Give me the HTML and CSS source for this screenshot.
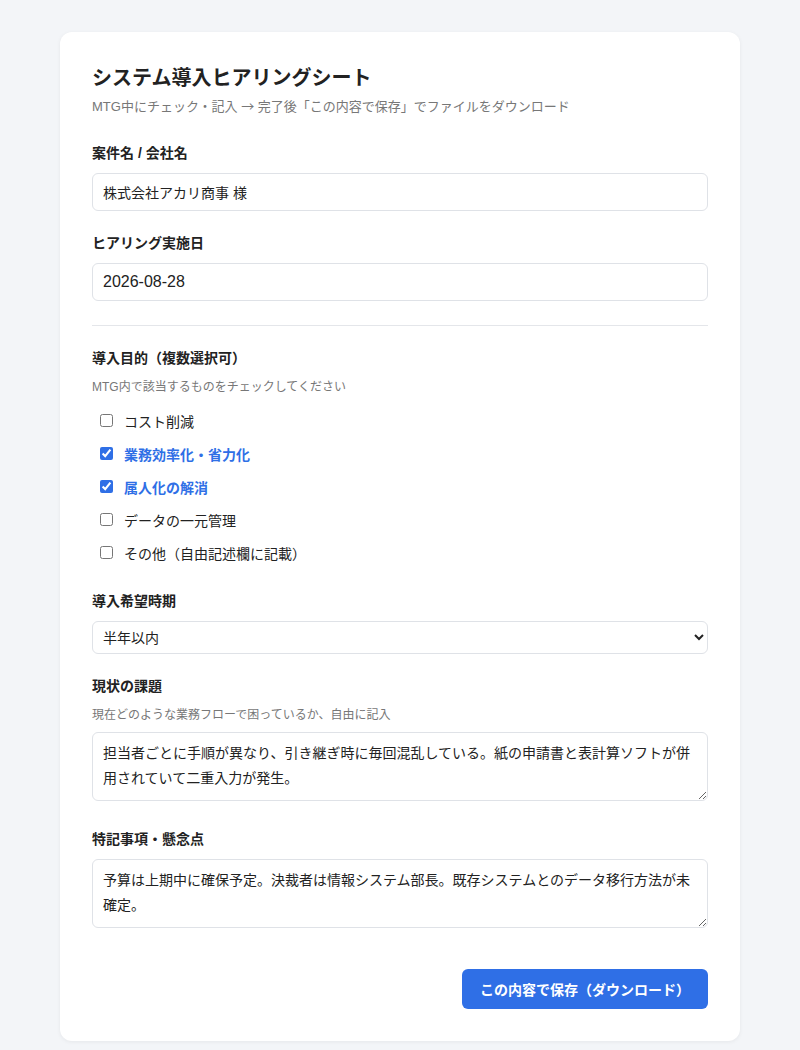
FILE: index.html
```html
<!DOCTYPE html>
<html lang="ja">
<head>
  <meta charset="UTF-8" />
  <meta name="viewport" content="width=device-width, initial-scale=1.0"/>
  <title>システム導入ヒアリングシート</title>
  <link rel="stylesheet" href="styles.css">
</head>
<body>

  <form class="sheet">
    <h1 class="title">システム導入ヒアリングシート</h1>
    <p class="lead">MTG中にチェック・記入 <span class="arrow">→</span> 完了後「この内容で保存」でファイルをダウンロード</p>

    <div class="field">
      <label class="label" for="company">案件名 / 会社名</label>
      <input class="input" id="company" type="text" value="株式会社アカリ商事 様">
    </div>

    <div class="field">
      <label class="label" for="date">ヒアリング実施日</label>
      <input class="input input-date" id="date" type="text" value="2026-08-28">
    </div>

    <hr class="divider">

    <div class="field field-group">
      <div class="label">導入目的（複数選択可）</div>
      <p class="hint">MTG内で該当するものをチェックしてください</p>
      <div class="checks">
        <label class="check"><input type="checkbox"><span>コスト削減</span></label>
        <label class="check"><input type="checkbox" checked><span>業務効率化・省力化</span></label>
        <label class="check"><input type="checkbox" checked><span>属人化の解消</span></label>
        <label class="check"><input type="checkbox"><span>データの一元管理</span></label>
        <label class="check"><input type="checkbox"><span>その他（自由記述欄に記載）</span></label>
      </div>
    </div>

    <div class="field">
      <label class="label" for="period">導入希望時期</label>
      <select class="select" id="period">
        <option>半年以内</option>
        <option>3ヶ月以内</option>
        <option>1年以内</option>
        <option>未定</option>
      </select>
    </div>

    <div class="field">
      <label class="label" for="issue">現状の課題</label>
      <p class="hint">現在どのような業務フローで困っているか、自由に記入</p>
      <textarea class="textarea" id="issue" rows="2">担当者ごとに手順が異なり、引き継ぎ時に毎回混乱している。紙の申請書と表計算ソフトが併用されていて二重入力が発生。</textarea>
    </div>

    <div class="field">
      <label class="label" for="notes">特記事項・懸念点</label>
      <textarea class="textarea" id="notes" rows="2">予算は上期中に確保予定。決裁者は情報システム部長。既存システムとのデータ移行方法が未確定。</textarea>
    </div>

    <div class="actions">
      <button class="btn" type="button">この内容で保存（ダウンロード）</button>
    </div>
  </form>

</body>
</html>
```

FILE: styles.css
```css
:root {
  --text: #222;
  --muted: #777;
  --border: #dfe2e7;
  --blue: #2f6fe6;
}

body {
  margin: 0;
  padding: 32px 0 10px;
  background: #f3f5f8;
  font-family: "Liberation Sans", "Noto Sans CJK JP", sans-serif;
  color: var(--text);
}

.sheet {
  width: 616px;
  margin: 0 auto;
  padding: 32px;
  background: #fff;
  border-radius: 12px;
  box-shadow: 0 1px 4px rgba(0, 0, 0, 0.06);
}

.title {
  margin: 0;
  font-size: 20px;
  line-height: 28px;
  font-weight: 700;
}

.lead {
  margin: 4px 0 26px;
  font-size: 13px;
  line-height: 20px;
  color: var(--muted);
}

.lead .arrow {
  font-family: "Noto Sans CJK JP", sans-serif;
}

.field {
  margin-bottom: 22px;
}

.label {
  display: block;
  font-size: 14px;
  line-height: 20px;
  font-weight: 700;
  margin-bottom: 10px;
}

.hint {
  margin: 0 0 8px;
  font-size: 12px;
  line-height: 18px;
  color: var(--muted);
}

.input,
.select,
.textarea {
  display: block;
  width: 100%;
  box-sizing: border-box;
  border: 1px solid var(--border);
  border-radius: 6px;
  font-family: inherit;
  font-size: 14px;
  color: var(--text);
  background: #fff;
}

.input {
  height: 38px;
  padding: 0 10px;
}

.input-date {
  font-size: 16px;
}

.select {
  height: 33px;
  padding: 0 6px;
}

.textarea {
  height: 69px;
  padding: 8px 10px;
  line-height: 25px;
  resize: vertical;
}

.field:has(.textarea) {
  margin-bottom: 28px;
}

.divider {
  border: 0;
  border-top: 1px solid #e4e6ea;
  margin: 24px 0 22px;
}

.field-group {
  margin-bottom: 26px;
}

.field-group .hint {
  margin-bottom: 12px;
}

.checks {
  display: flex;
  flex-direction: column;
  gap: 8px;
}

.check {
  display: flex;
  align-items: center;
  gap: 11px;
  height: 25px;
  padding-left: 8px;
  font-size: 14px;
  cursor: pointer;
}

.check input {
  width: 13px;
  height: 13px;
  margin: 0;
  accent-color: var(--blue);
}

.check input:checked + span {
  color: var(--blue);
  font-weight: 700;
}

.actions {
  display: flex;
  justify-content: flex-end;
  margin-top: 41px;
}

.btn {
  width: 246px;
  height: 40px;
  border: none;
  border-radius: 6px;
  background: var(--blue);
  color: #fff;
  font-family: inherit;
  font-size: 14px;
  font-weight: 700;
  cursor: pointer;
}
```
